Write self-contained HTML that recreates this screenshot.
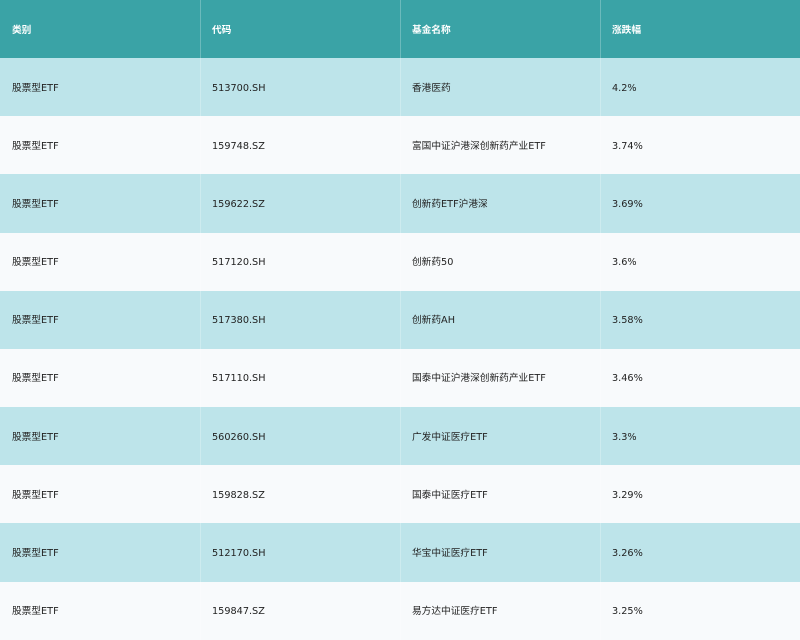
<!DOCTYPE html>
<html><head><meta charset="utf-8"><style>
body{margin:0;width:800px;height:640px;overflow:hidden;font-family:"DejaVu Sans","Noto Sans CJK SC",sans-serif;font-size:9.7px;color:#222}
.row{display:flex;height:58.18px}
.c{width:200px;box-sizing:border-box;padding-left:12px;padding-top:3px;display:flex;align-items:center;line-height:12px;box-shadow:inset 1px 0 0 rgba(255,255,255,0.25)}
.c:first-child{box-shadow:none}
.h{background:#3aa3a6;color:#fff;font-weight:bold;height:58px}
.row:nth-child(even) .c{background:#bde4ea}
.row:nth-child(odd):not(.h) .c{background:#f8fafc}
.h .c{background:#3aa3a6}
</style></head><body>
<div class="row h"><div class="c">类别</div><div class="c">代码</div><div class="c">基金名称</div><div class="c">涨跌幅</div></div>
<div class="row"><div class="c">股票型ETF</div><div class="c">513700.SH</div><div class="c">香港医药</div><div class="c">4.2%</div></div>
<div class="row"><div class="c">股票型ETF</div><div class="c">159748.SZ</div><div class="c">富国中证沪港深创新药产业ETF</div><div class="c">3.74%</div></div>
<div class="row"><div class="c">股票型ETF</div><div class="c">159622.SZ</div><div class="c">创新药ETF沪港深</div><div class="c">3.69%</div></div>
<div class="row"><div class="c">股票型ETF</div><div class="c">517120.SH</div><div class="c">创新药50</div><div class="c">3.6%</div></div>
<div class="row"><div class="c">股票型ETF</div><div class="c">517380.SH</div><div class="c">创新药AH</div><div class="c">3.58%</div></div>
<div class="row"><div class="c">股票型ETF</div><div class="c">517110.SH</div><div class="c">国泰中证沪港深创新药产业ETF</div><div class="c">3.46%</div></div>
<div class="row"><div class="c">股票型ETF</div><div class="c">560260.SH</div><div class="c">广发中证医疗ETF</div><div class="c">3.3%</div></div>
<div class="row"><div class="c">股票型ETF</div><div class="c">159828.SZ</div><div class="c">国泰中证医疗ETF</div><div class="c">3.29%</div></div>
<div class="row"><div class="c">股票型ETF</div><div class="c">512170.SH</div><div class="c">华宝中证医疗ETF</div><div class="c">3.26%</div></div>
<div class="row"><div class="c">股票型ETF</div><div class="c">159847.SZ</div><div class="c">易方达中证医疗ETF</div><div class="c">3.25%</div></div>
</body></html>
